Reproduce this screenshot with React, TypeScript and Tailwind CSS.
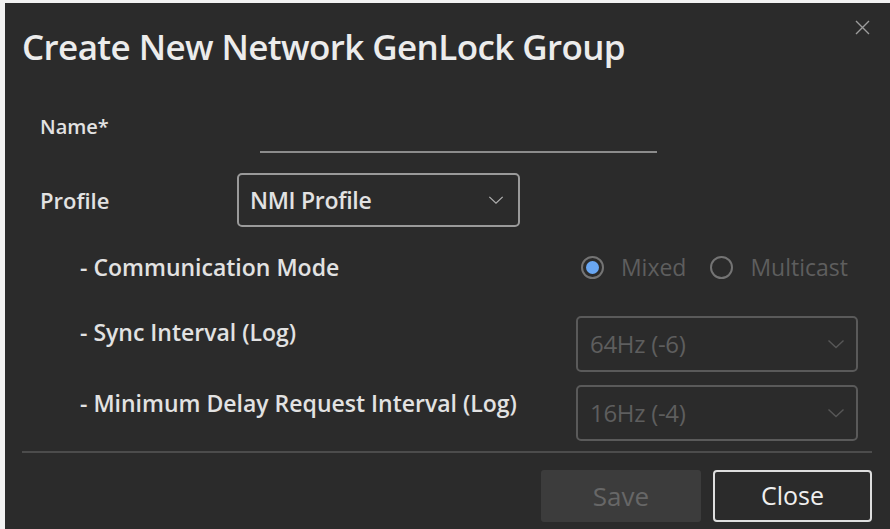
import React from "react";

const font = { fontFamily: '"Open Sans", "Noto Sans", "Liberation Sans", sans-serif' };

function Chevron({ className = "", w = 18 }: { className?: string; w?: number }) {
  return (
    <svg width={w} height="10" viewBox="0 0 18 10" className={className} fill="none">
      <path d="M1.5 1.5 L9 8.5 L16.5 1.5" stroke="currentColor" strokeWidth="1.4" />
    </svg>
  );
}

function Radio({ checked, label }: { checked?: boolean; label: string }) {
  return (
    <div className="flex items-center gap-[17px]">
      <span className="flex h-[23px] w-[23px] items-center justify-center rounded-full border-2 border-[#747474]">
        {checked && <span className="h-[13px] w-[13px] rounded-full bg-[#69a7f3]" />}
      </span>
      <span className="text-[23px] leading-[30px] text-[#5e5e5e]">{label}</span>
    </div>
  );
}

function DisabledSelect({ value }: { value: string }) {
  return (
    <div className="flex h-[56px] w-[282px] items-center justify-between rounded-[5px] border-2 border-[#5a5a5a] pl-[12px] pr-[11px] text-[#5e5e5e]">
      <span className="text-[24px] tracking-[-0.3px]">{value}</span>
      <Chevron className="text-[#575757]" />
    </div>
  );
}

export default function App() {
  return (
    <div className="min-h-[529px] w-[890px] bg-[#f2f2f2] pl-[5px] pt-[3px]" style={font}>
      <div className="relative h-[526px] bg-[#2b2b2b] text-[#e2e2e2]">
        <button className="absolute right-[20px] top-[17px] text-[#9c9c9c]">
          <svg width="15" height="15" viewBox="0 0 15 15" fill="none">
            <path d="M1 1 L14 14 M14 1 L1 14" stroke="currentColor" strokeWidth="1.4" />
          </svg>
        </button>

        <h1 className="pl-[17px] pt-[20px] text-[35px] font-semibold leading-[48px] tracking-[-0.6px] text-[#ececec]">
          Create New Network GenLock Group
        </h1>

        <div className="pl-[35px] pt-[41px]">
          <div className="flex items-start">
            <span className="w-[220px] text-[20px] font-semibold leading-[30px]">Name*</span>
            <div className="mt-[39px] h-[2px] w-[397px] bg-[#8c8c8c]" />
          </div>

          <div className="mt-[20px] flex items-center">
            <span className="w-[197px] text-[22px] font-semibold">Profile</span>
            <div className="flex h-[54px] w-[283px] items-center justify-between rounded-[5px] border-2 border-[#9a9a9a] pl-[11px] pr-[14px]">
              <span className="text-[23px] font-semibold tracking-[-0.3px]">NMI Profile</span>
              <Chevron w={16} className="text-[#b0b0b0]" />
            </div>
          </div>

          <div className="pl-[40px]">
            <div className="mt-[20px] flex h-[40px] items-center justify-between pr-[42px]">
              <span className="text-[23px] font-semibold">- Communication Mode</span>
              <div className="flex items-center gap-[24px]">
                <Radio checked label="Mixed" />
                <Radio label="Multicast" />
              </div>
            </div>

            <div className="mt-[29px] flex items-start justify-between pr-[32px]">
              <span className="mt-[1px] text-[23px] font-semibold leading-[30px]">- Sync Interval (Log)</span>
              <DisabledSelect value="64Hz (-6)" />
            </div>

            <div className="mt-[13px] flex items-start justify-between pr-[32px]">
              <span className="mt-[3px] text-[23px] font-semibold leading-[30px]">
                - Minimum Delay Request Interval (Log)
              </span>
              <DisabledSelect value="16Hz (-4)" />
            </div>
          </div>
        </div>

        <div className="ml-[17px] mr-[18px] mt-[10px] h-[2px] bg-[#4c4c4c]" />

        <div className="flex justify-end gap-[12px] pr-[18px] pt-[17px]">
          <button className="h-[52px] w-[160px] rounded-[3px] bg-[#3c3c3c] text-[26px] text-[#676767]">
            Save
          </button>
          <button className="h-[52px] w-[159px] rounded-[4px] border-2 border-[#dedede] text-[25px] font-medium text-[#efefef]">
            Close
          </button>
        </div>
      </div>
    </div>
  );
}
